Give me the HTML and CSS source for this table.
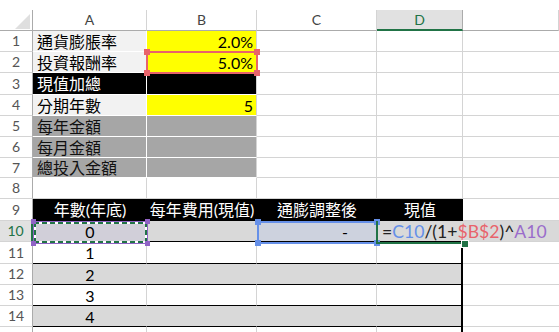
FILE: index.html
```html
<!DOCTYPE html>
<html lang="zh-Hant">
<head>
  <meta charset="UTF-8" />
  <title>現值試算</title>
  <link rel="stylesheet" href="styles.css">
</head>
<body>
  <div class="sheet">
    <div class="row head">
      <div class="corner"><span class="tri"></span></div>
      <div class="col">A</div>
      <div class="col">B</div>
      <div class="col">C</div>
      <div class="col sel">D</div>
      <div class="col last"></div>
    </div>

    <div class="row">
      <div class="rh">1</div>
      <div class="c a lbl">通貨膨脹率</div>
      <div class="c yel num">2.0%</div>
      <div class="c"></div><div class="c"></div><div class="c last"></div>
    </div>
    <div class="row">
      <div class="rh">2</div>
      <div class="c a lbl">投資報酬率</div>
      <div class="c yel num">5.0%</div>
      <div class="c"></div><div class="c"></div><div class="c last"></div>
    </div>
    <div class="row tall">
      <div class="rh">3</div>
      <div class="c a blk">現值加總</div>
      <div class="c blk"></div>
      <div class="c"></div><div class="c"></div><div class="c last"></div>
    </div>
    <div class="row">
      <div class="rh">4</div>
      <div class="c a lbl">分期年數</div>
      <div class="c yel num">5</div>
      <div class="c"></div><div class="c"></div><div class="c last"></div>
    </div>
    <div class="row">
      <div class="rh">5</div>
      <div class="c a gry">每年金額</div>
      <div class="c gry"></div>
      <div class="c"></div><div class="c"></div><div class="c last"></div>
    </div>
    <div class="row">
      <div class="rh">6</div>
      <div class="c a gry">每月金額</div>
      <div class="c gry"></div>
      <div class="c"></div><div class="c"></div><div class="c last"></div>
    </div>
    <div class="row short">
      <div class="rh">7</div>
      <div class="c a gry">總投入金額</div>
      <div class="c gry"></div>
      <div class="c"></div><div class="c"></div><div class="c last"></div>
    </div>
    <div class="row">
      <div class="rh">8</div>
      <div class="c"></div><div class="c"></div><div class="c"></div><div class="c"></div><div class="c last"></div>
    </div>

    <!-- 表頭 -->
    <div class="row tall">
      <div class="rh">9</div>
      <div class="c th">年數(年底)</div>
      <div class="c th">每年費用(現值)</div>
      <div class="c th">通膨調整後</div>
      <div class="c th">現值</div>
      <div class="c last"></div>
    </div>
    <div class="row">
      <div class="rh sel">10</div>
      <div class="c tb band mid pick-a">0</div>
      <div class="c tb band"></div>
      <div class="c tb band num pick-c dash">-</div>
      <div class="c tb band edit">=<span class="r-c">C10</span>/(1+<span class="r-b">$B$2</span>)^<span class="r-a">A10</span><span class="caret"></span></div>
      <div class="c band last"></div>
    </div>
    <div class="row tall">
      <div class="rh">11</div>
      <div class="c tb mid">1</div>
      <div class="c tb"></div><div class="c tb"></div><div class="c tb end"></div>
      <div class="c last"></div>
    </div>
    <div class="row">
      <div class="rh">12</div>
      <div class="c tb band mid">2</div>
      <div class="c tb band"></div><div class="c tb band"></div><div class="c tb band end"></div>
      <div class="c last"></div>
    </div>
    <div class="row">
      <div class="rh">13</div>
      <div class="c tb mid">3</div>
      <div class="c tb"></div><div class="c tb"></div><div class="c tb end"></div>
      <div class="c last"></div>
    </div>
    <div class="row">
      <div class="rh">14</div>
      <div class="c tb band mid">4</div>
      <div class="c tb band"></div><div class="c tb band"></div><div class="c tb band end"></div>
      <div class="c last"></div>
    </div>
    <div class="row">
      <div class="rh"></div>
      <div class="c"></div><div class="c"></div><div class="c"></div><div class="c end"></div><div class="c last"></div>
    </div>

    <!-- 公式參照框 -->
    <div class="ref red">
      <i class="h tl"></i><i class="h tr"></i><i class="h bl"></i><i class="h br"></i>
    </div>
    <div class="ref purple">
      <div class="ants"></div>
      <i class="h tl"></i><i class="h tr"></i><i class="h bl"></i><i class="h br"></i>
    </div>
    <div class="ref blue">
      <i class="h tl"></i><i class="h tr"></i><i class="h bl"></i><i class="h br"></i>
    </div>
    <div class="active"><i class="fill"></i></div>
  </div>
</body>
</html>
```

FILE: styles.css
```css
* { box-sizing: border-box; }
body {
  margin: 0;
  background: #fff;
  font-family: Lato, "Noto Sans CJK TC", sans-serif;
  font-size: 16px;
  color: #000;
  overflow: hidden;
}
.sheet {
  position: relative;
  padding-top: 10px;
}
.row {
  display: grid;
  grid-template-columns: 33px 114px 110px 120px 86px 1fr;
  grid-template-rows: 100%;
  height: 21px;
  line-height: 18px;
}
.row.tall { height: 22px; }
.row.short { height: 20px; }

/* 欄列標題 */
.corner {
  display: flex;
  justify-content: flex-end;
  align-items: flex-end;
  padding: 0 2px 1px 0;
  border-right: 1px solid #ababab;
  border-bottom: 1px solid #ababab;
}
.tri {
  width: 15px;
  height: 15px;
  background: #dfdfdf;
  clip-path: polygon(100% 0, 100% 100%, 0 100%);
}
.col {
  display: flex;
  justify-content: center;
  align-items: center;
  font-size: 14px;
  color: #444;
  border-right: 1px solid #d4d4d4;
  border-bottom: 1px solid #ababab;
}
.col.sel {
  background: #e1e1e1;
  color: #217346;
  border-right-color: #ababab;
  border-bottom: 2px solid #217346;
}
.rh {
  display: flex;
  justify-content: center;
  align-items: center;
  font-size: 14px;
  color: #555;
  border-right: 1px solid #ababab;
  border-bottom: 1px solid #d4d4d4;
}
.rh.sel {
  background: #e1e1e1;
  color: #217346;
  border-right: 2px solid #217346;
}

/* 儲存格 */
.c {
  display: flex;
  align-items: center;
  min-height: 0;
  padding: 1px 3px 0 4px;
  white-space: nowrap;
  border-right: 1px solid #d4d4d4;
  border-bottom: 1px solid #d4d4d4;
}
.c.last { border-right: none; }
.num { justify-content: flex-end; }
.mid { justify-content: center; }

.c.lbl, .c.yel, .c.blk, .c.gry { border-bottom-color: #fff; }
.c.a { border-right-color: #fff; }
.lbl { background: #f2f2f2; }
.yel { background: #ffff00; }
.blk { background: #000; color: #fff; }
.gry { background: #a6a6a6; color: #111; }

.th {
  justify-content: center;
  background: #000;
  color: #fff;
  border-color: #000;
}
.tb { border-bottom-color: #000; }
.band {
  background: #d9d9d9;
  border-right-color: #d9d9d9;
}
.c.band.last { border-bottom-color: #d4d4d4; }
.c.end { border-right: 2px solid #000; }
.pick-a { background: #d1cfd9; }
.pick-c { background: #cdd2de; }
.dash { padding-right: 28px; }

/* 編輯中的公式 */
.edit {
  padding-left: 5px;
  font-size: 17.6px;
  color: #222;
  overflow: visible;
  position: relative;
  z-index: 1;
}
.r-c { color: #648fe8; }
.r-b { color: #e8636b; }
.r-a { color: #9a6ccb; }
.caret {
  display: inline-block;
  width: 1px;
  height: 16px;
  margin-left: 1px;
  background: #222;
}

/* 參照框與選取範圍 */
.ref {
  position: absolute;
  border: 2px solid var(--line);
  z-index: 2;
}
.h {
  position: absolute;
  width: 6px;
  height: 6px;
  background: var(--line);
}
.tl { top: -4px; left: -4px; }
.tr { top: -4px; right: -4px; }
.bl { bottom: -4px; left: -4px; }
.br { bottom: -4px; right: -4px; }

.red {
  --line: #e8636b;
  left: 146px;
  top: 51px;
  width: 112px;
  height: 23px;
}
.blue {
  --line: #6690e8;
  left: 257px;
  top: 221px;
  width: 121px;
  height: 23px;
}
.purple {
  --line: #9063c5;
  left: 33px;
  top: 221px;
  width: 115px;
  height: 23px;
  border-width: 1px;
}
.purple .h { width: 5px; height: 5px; }
.purple .tl { top: -3px; left: -3px; }
.purple .tr { top: -3px; right: -3px; }
.purple .bl { bottom: -3px; left: -3px; }
.purple .br { bottom: -3px; right: -3px; }

/* 複製範圍的虛線 */
.ants {
  position: absolute;
  inset: 0;
  background:
    repeating-linear-gradient(90deg, #217346 0 5px, #fff 5px 8px) top / 100% 2px no-repeat,
    repeating-linear-gradient(90deg, #217346 0 5px, #fff 5px 8px) bottom / 100% 2px no-repeat,
    repeating-linear-gradient(0deg, #217346 0 5px, #fff 5px 8px) left / 2px 100% no-repeat,
    repeating-linear-gradient(0deg, #217346 0 5px, #fff 5px 8px) right / 2px 100% no-repeat;
}

.active {
  position: absolute;
  left: 376px;
  top: 221px;
  width: 89px;
  height: 23px;
  border-left: 2px solid #217346;
  border-bottom: 2px solid #217346;
  z-index: 3;
}
.fill {
  position: absolute;
  right: -3px;
  bottom: -5px;
  width: 6px;
  height: 6px;
  background: #217346;
  outline: 1px solid #fff;
}
```
